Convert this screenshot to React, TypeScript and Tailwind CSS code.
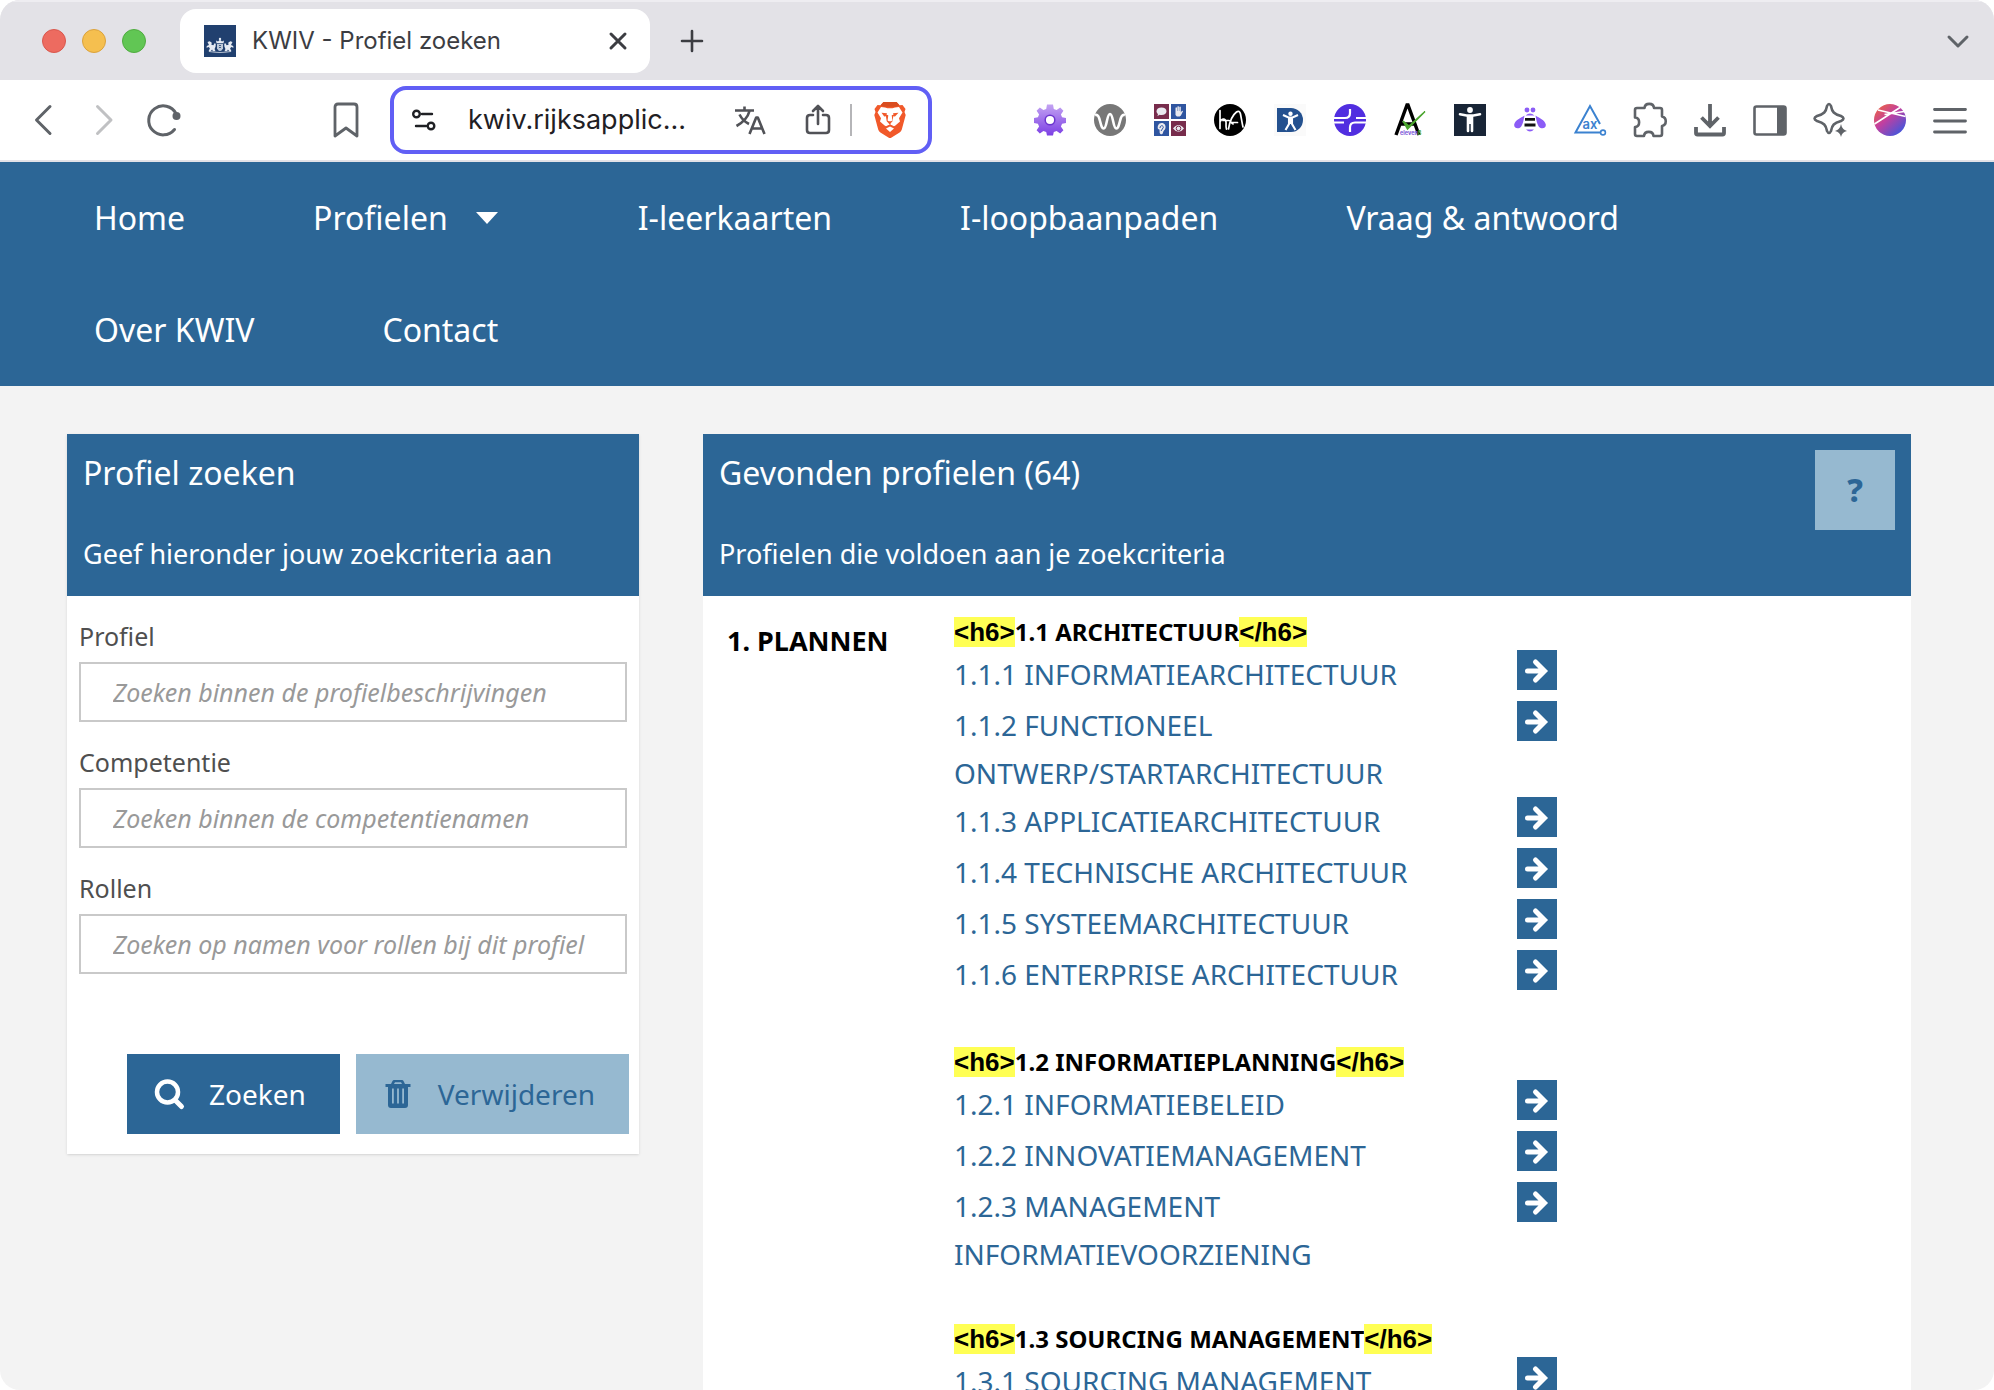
import React from 'react';

const NAV_ROWS = [
  [
    { label: 'Home' },
    { label: 'Profielen', menu: true },
    { label: 'I-leerkaarten' },
    { label: 'I-loopbaanpaden' },
    { label: 'Vraag & antwoord' },
  ],
  [{ label: 'Over KWIV' }, { label: 'Contact' }],
];

const FIELDS = [
  { id: 'profiel', label: 'Profiel', hint: 'Zoeken binnen de profielbeschrijvingen' },
  { id: 'competentie', label: 'Competentie', hint: 'Zoeken binnen de competentienamen' },
  { id: 'rollen', label: 'Rollen', hint: 'Zoeken op namen voor rollen bij dit profiel' },
];

const GROUPS = [
  {
    title: '1.1 ARCHITECTUUR',
    items: [
      '1.1.1 INFORMATIEARCHITECTUUR',
      '1.1.2 FUNCTIONEEL ONTWERP/STARTARCHITECTUUR',
      '1.1.3 APPLICATIEARCHITECTUUR',
      '1.1.4 TECHNISCHE ARCHITECTUUR',
      '1.1.5 SYSTEEMARCHITECTUUR',
      '1.1.6 ENTERPRISE ARCHITECTUUR',
    ],
  },
  {
    title: '1.2 INFORMATIEPLANNING',
    items: ['1.2.1 INFORMATIEBELEID', '1.2.2 INNOVATIEMANAGEMENT', '1.2.3 MANAGEMENT INFORMATIEVOORZIENING'],
  },
  { title: '1.3 SOURCING MANAGEMENT', items: ['1.3.1 SOURCING MANAGEMENT'] },
];

const line = {
  fill: 'none',
  stroke: '#5f6368',
  strokeWidth: 3,
  strokeLinecap: 'round' as const,
  strokeLinejoin: 'round' as const,
};

function Favicon() {
  return (
    <svg className="h-8 w-8" viewBox="0 0 32 32" aria-hidden="true">
      <rect width="32" height="32" fill="#21406f" />
      <g fill="#e6ebf3">
        <circle cx="16" cy="14" r="1.2" />
        <path d="M12.5 18.2 12 15.4l2 1 2-1.6 2 1.6 2-1-.5 2.8z" />
        <path d="M13 19h6v4.2q-.8 2.300-3 3-2.200-.7-3-3z" opacity=".8" />
        <path d="m3.500 17 2.200-.8 2.100 1.600-.4 1.900 2 .6 1.100-2.100 1.300.6-.2 2.800-1 2.400.9 2.200H8.900l-.8-1.700-1.400 1.700H4.500l1.400-2.600-1.100-1.500-2.300.6.300-1.600 2.200-1z" />
        <path d="m28.500 17-2.200-.8-2.100 1.600.4 1.900-2 .6-1.100-2.100-1.300.6.200 2.800 1 2.400-.9 2.200h2.600l.8-1.700 1.400 1.700h2.200l-1.400-2.600 1.100-1.500 2.300.6-.3-1.600-2.200-1z" />
        <path d="M5 26.200q11 1.500 22 0v.9q-11 1.300-22 0z" />
      </g>
      <path d="M15 20.500h2M15 22.500h2" stroke="#21406f" strokeWidth=".8" />
    </svg>
  );
}

function TabBar() {
  return (
    <div className="flex h-20 items-center border-t-2 border-[#eeedf1] bg-[#e3e2e7] pr-6 pl-[42px]">
      <div className="flex gap-4">
        <span className="size-6 rounded-full border border-[#d9574d] bg-[#ed6b60]" />
        <span className="size-6 rounded-full border border-[#dba23c] bg-[#f5bf4f]" />
        <span className="size-6 rounded-full border border-[#50ac40] bg-[#61c654]" />
      </div>
      <div className="ml-[34px] flex h-16 w-[470px] items-center rounded-2xl bg-white pr-4 pl-6">
        <Favicon />
        <span className="ml-4 flex-1 text-2xl text-[#3c3d42]">KWIV - Profiel zoeken</span>
        <button aria-label="Tab sluiten" className="p-1">
          <svg className="size-6" viewBox="0 0 24 24" {...line} stroke="#3c3d42">
            <path d="m5 5 14 14M19 5 5 19" />
          </svg>
        </button>
      </div>
      <button aria-label="Nieuw tabblad" className="ml-[30px]">
        <svg className="size-6" viewBox="0 0 24 24" {...line} strokeWidth={2.6} stroke="#3c3d42">
          <path d="M12 2v20M2 12h20" />
        </svg>
      </button>
      <button aria-label="Tabbladen zoeken" className="ml-auto">
        <svg className="size-6" viewBox="0 0 24 24" {...line}>
          <path d="m3 8 9 9 9-9" />
        </svg>
      </button>
    </div>
  );
}

const EXTENSIONS: { name: string; art: React.ReactNode }[] = [
  {
    name: 'Instellingen',
    art: (
      <>
        <defs>
          <linearGradient id="gear" x1="0" y1="0" x2="0" y2="1">
            <stop offset="0" stopColor="#c3a3f2" />
            <stop offset="1" stopColor="#7c3fe4" />
          </linearGradient>
        </defs>
        <g fill="url(#gear)">
          <path d="M15 2.500h6l.8 4.400 2.800 1.200 3.600-2.500 3.200 3.200-2.500 3.600 1.200 2.800 3.900.8v5l-3.900.8-1.200 2.800 2.500 3.600-3.200 3.200-3.600-2.500-2.800 1.200-.8 3.400h-6l-.8-3.400-2.800-1.200-3.600 2.500-3.200-3.200 2.500-3.600-1.200-2.800-3.900-.8v-5l3.900-.8 1.200-2.800-2.500-3.600 3.200-3.200 3.600 2.500 2.800-1.200z" />
        </g>
        <circle cx="18" cy="18" r="4.800" fill="#fff" stroke="#6c35cf" strokeWidth="1.5" />
      </>
    ),
  },
  {
    name: 'WAVE',
    art: (
      <>
        <circle cx="18" cy="18" r="16" fill="#777" />
        <path
          d="M3 13c3-1 4 2 5 6 1.300 5 2 7.500 3.700 7.500 3.300 0 3-14.500 6.300-14.500s3 14.500 6.300 14.500c1.700 0 2.400-2.500 3.700-7.500 1-4 2-7 5-6"
          fill="none"
          stroke="#fff"
          strokeWidth="2.6"
        />
      </>
    ),
  },
  {
    name: 'Toegankelijkheid',
    art: (
      <>
        <path fill="#772c4c" d="M2 2h15v15H2zM19 19h15v15H19z" />
        <path fill="#2f55a0" d="M19 2h15v15H19zM2 19h15v15H2z" />
        <g fill="#e9e9ef">
          <path d="M9.500 5.500c3 0 5 1.600 5 3.700s-2 3.700-5 3.700c-.7 0-1.300-.1-1.800-.2-.8.700-1.800 1-2.600 1 .6-.6.900-1.200.9-1.800-.9-.7-1.500-1.600-1.500-2.700 0-2.100 2-3.700 5-3.700z" />
          <path d="M23.500 8.500V5.800q.8-.9 1.500 0V9h.4V4.600q.8-.9 1.500 0V9h.4V5q.8-.9 1.500 0v5.500l1-1.500q1.300-.5 1.100.6l-2 4-1.300 1h-2.700l-1.400-1.500z" />
          <path d="M6 27c-1-3 .8-6 3.600-6 3 0 4.500 2.600 3.800 5.200-.5 1.800-2 2.300-2.300 4-.3 1.900-1.400 2.500-2.700 1.800C7 31 8 29 7.400 27.600z" />
          <path d="M21 26.500q2.500-3.500 5.500-3.500t5.500 3.500q-2.500 3.300-5.500 3.300T21 26.500z" />
        </g>
        <circle cx="26.5" cy="26.4" r="2.3" fill="none" stroke="#772c4c" />
        <path d="M8 26c0-3 3.500-3 3.300-.5L9 29" fill="none" stroke="#2f55a0" />
      </>
    ),
  },
  {
    name: 'hA',
    art: (
      <>
        <circle cx="18" cy="18" r="16" fill="#000" />
        <path
          d="M8 8.500v18M8 20c1.500-3.500 5.500-4 6 0 .3 2.500-.5 5 .5 7M11 18.500h6c2 0 2 3 4 3.500M16.500 27c1-6 4-14 8-17 2-1.500 3.500-.5 4 2 .8 4 1.500 9 2.500 13M18.500 20.500h7"
          fill="none"
          stroke="#fff"
          strokeWidth="1.7"
          strokeLinecap="round"
        />
      </>
    ),
  },
  {
    name: 'Digitale toegankelijkheid',
    art: (
      <>
        <path fill="#fafafa" d="M2 2h32v32H2z" />
        <path d="M5 6h14a12 12 0 0 1 0 24H5z" fill="#24518f" />
        <circle cx="18.5" cy="11.8" r="2.2" fill="#fff" />
        <path
          d="m11 13 5.500 2.500h4l5.500-2.500M18.500 16v6M17 16.500v5.500L13.500 28M20 16.500v5.500l3.500 6"
          stroke="#fff"
          strokeWidth="2.1"
          fill="none"
        />
      </>
    ),
  },
  {
    name: 'Stark',
    art: (
      <>
        <circle cx="18" cy="18" r="16" fill="#512ee0" />
        <path
          d="M2 16h11q5 0 5-5V7M34 16H24M2 20.500h10M34 20.500H23q-5 0-5 5V30"
          fill="none"
          stroke="#fff"
          strokeWidth="2.2"
        />
      </>
    ),
  },
  {
    name: 'A11y',
    art: (
      <>
        <path d="M4 33 15 3h1l11 30M9 22h13" fill="none" stroke="#000" strokeWidth="3.4" />
        <path d="M8 29h15v4H8z" fill="#fff" />
        <path d="m11 19 4.500 8L33 9.500 17 24z" fill="#4aa52e" stroke="#4aa52e" strokeWidth="1.5" />
        <text x="8" y="33" fontSize="5.500" fontWeight="700" fill="#7a55d8">
          eleven<tspan fill="#4aa52e">8</tspan>
        </text>
      </>
    ),
  },
  {
    name: 'Inspectie',
    art: (
      <>
        <path fill="#182536" d="M2 2h32v32H2z" />
        <circle cx="18" cy="8" r="2.9" fill="#fff" />
        <path
          d="m8 12.300 6.500 1.200h7l6.500-1.200M16 14v15M20 14v15"
          stroke="#fff"
          strokeWidth="2.6"
          strokeLinecap="round"
          fill="none"
        />
        <path d="M15 13h6v9h-6z" fill="#fff" />
      </>
    ),
  },
  {
    name: 'Bij',
    art: (
      <>
        <g fill="#8b5cf6">
          <circle cx="15" cy="8" r="2.4" />
          <circle cx="21" cy="8" r="2.4" />
          <path d="M13.500 13.500q4.500-4 9 0zM14 27.500h8q-4 4-8 0z" />
          <path d="M12.500 13.500C9 16 3 18 2.200 22.500 1.800 26 5 27 7.500 26c3-1.500 4-7 5-12.500zM23.500 13.500C27 16 33 18 33.800 22.500 34.200 26 31 27 28.500 26c-3-1.500-4-7-5-12.500z" />
        </g>
        <path d="M13 16h10v2.800H13zM12.500 21.500h11v3h-11z" fill="#111" />
      </>
    ),
  },
  {
    name: 'axe DevTools',
    art: (
      <>
        <path d="m28 22-10-18L3.500 30.500H28" fill="none" stroke="#3b82d0" strokeWidth="2" />
        <circle cx="31" cy="30.5" r="2.4" fill="none" stroke="#3b82d0" strokeWidth="1.6" />
        <text x="10.5" y="27" fontSize="13" fontWeight="600" fill="#3b82d0">
          ax
        </text>
      </>
    ),
  },
  {
    name: 'Extensies',
    art: (
      <path
        {...line}
        strokeWidth={2.6}
        d="M3 8q0-2 2-2h7.500c.5-5.500 9-5.500 9.500 0H28q2 0 2 2v6.500c5 1 5 8.500 0 9.500v8q0 2-2 2h-6.500c-.5-5.500-9-5.500-9.500 0H5q-2 0-2-2v-7c5.500-.5 5.500-9 0-9.500z"
      />
    ),
  },
  {
    name: 'Downloads',
    art: (
      <path
        d="M18 2v21M9.500 15.500l8.500 8.500 8.500-8.500M4 25v6q0 1.500 1.500 1.500h25q1.500 0 1.500-1.500v-6"
        fill="none"
        stroke="#5f6368"
        strokeWidth="3.8"
      />
    ),
  },
  {
    name: 'Zijbalk',
    art: (
      <>
        <rect x="2.5" y="4.5" width="31" height="28" rx="2" fill="none" stroke="#5f6368" strokeWidth="2.6" />
        <path d="M25 4h8v29h-8z" fill="#5f6368" />
      </>
    ),
  },
  {
    name: 'Leo',
    art: (
      <>
        <path
          {...line}
          strokeWidth={2.6}
          d="M15 4q2-4 4 0c1 6 3 8 10 10q5 2.500 0 5c-7 2-9 4-10 10q-2 4-4 0c-1-6-3-8-10-10q-5-2.500 0-5c7-2 9-4 10-10z"
        />
        <path d="M29 22q1 5.500 6 7-5 1-6 6-1-5-6-6 5-1.500 6-7z" fill="#5f6368" />
      </>
    ),
  },
  {
    name: 'Profiel',
    art: (
      <>
        <defs>
          <linearGradient id="globe" x1="0.1" y1="0.1" x2="0.8" y2="0.9">
            <stop offset="0" stopColor="#e8604c" />
            <stop offset=".45" stopColor="#c23fa0" />
            <stop offset="1" stopColor="#4a55d8" />
          </linearGradient>
        </defs>
        <circle cx="18" cy="18" r="16" fill="url(#globe)" />
        <path d="m2.500 22 25.500-16.500M6 8l27.500 6.500M12.500 12.500 32 9.500" stroke="#fff" strokeWidth="1.6" fill="none" />
      </>
    ),
  },
  {
    name: 'Menu',
    art: <path d="M2.500 7.500h31M2.500 19h31M2.500 30h31" {...line} strokeWidth={2.8} />,
  },
];

function AddressBar() {
  return (
    <div className="flex h-[68px] w-[542px] items-center rounded-2xl border-4 border-[#615ff5] bg-white pr-[22px] pl-[18px]">
      <button aria-label="Site-informatie">
        <svg className="size-6" viewBox="0 0 24 24" {...line} strokeWidth={2.4} stroke="#1f2024">
          <circle cx="4.5" cy="6" r="3.3" />
          <path d="M10 6h10M4 18h10" />
          <circle cx="19" cy="18" r="3.3" />
        </svg>
      </button>
      <input
        aria-label="Adres"
        className="ml-8 w-[230px] bg-transparent text-[27px] text-[#1f2024] outline-none"
        defaultValue="kwiv.rijksapplic..."
      />
      <button aria-label="Vertalen" className="ml-9">
        <svg className="size-8" viewBox="0 0 32 32" {...line} strokeWidth={2.6} strokeLinecap="butt" stroke="#515257">
          <path d="M1 6.500h19M10.500 2.500v4M15.500 7c-1.500 6-6 11-13 15M5.500 10.500c2 4 5.500 7.500 9.500 9.500M15.500 30l6.700-16.500h1.600L30.500 30M18 24.500h10" />
        </svg>
      </button>
      <button aria-label="Delen" className="ml-9">
        <svg className="size-8" viewBox="0 0 32 32" {...line} strokeWidth={2.6} stroke="#515257">
          <path d="M11 11H8q-3 0-3 3v12q0 3 3 3h16q3 0 3-3V14q0-3-3-3h-3M16 20V2M11 7l5-5 5 5" />
        </svg>
      </button>
      <span className="ml-4 h-8 w-0.5 bg-[#b5b5b8]" />
      <button aria-label="Brave Shields" className="ml-auto">
        <svg className="h-9 w-8" viewBox="0 0 32 36" aria-hidden="true">
          <path
            fill="#f1592a"
            d="M9.500 0h13l3 3.300 3-.3L31.500 7l-1 3 1.200 3-3.900 14.500q-.6 2-2.200 3L16.800 36h-1.600l-8.800-5.500q-1.600-1-2.200-3L.3 13l1.200-3-1-3L3.500 3l3 .3z"
          />
          <path fill="#d94d20" d="M9.500 0h13l3 3.300-3.500 1.500h-12L6.500 3.300z" />
          <path
            fill="#fff"
            d="m11 5.500 2.500.7h5l2.500-.7 4-.5 3.500 5.500-3.500 5.800 1 3.200-4.600 4-1.400.7-2.500-1.300h-3l-2.500 1.300-1.400-.7-4.600-4 1-3.200-3.500-5.800L7 5zM12 26.500l4-2 4 2-4 3.500z"
          />
          <path
            fill="#f1592a"
            d="m7.500 10.800 5.500.4-.5 1.500 1.800.5-.7 5.300 1.300.8h2.200l1.300-.8-.7-5.300 1.800-.5-.5-1.500 5.500-.4-3.500 3.800-1.700-.4-.8 5-2.500 2.800h-.8l-2.500-2.800-.8-5-1.700.4zM15.400 21h1.200v2.800h-1.200z"
          />
        </svg>
      </button>
    </div>
  );
}

function Toolbar() {
  return (
    <div className="flex h-[82px] items-center border-b-2 border-[#e3e2e7] bg-white pr-[26px] pl-7">
      <button aria-label="Terug">
        <svg className="size-8" viewBox="0 0 32 32" {...line}>
          <path d="M22 2.500 8.500 16 22 29.500" />
        </svg>
      </button>
      <button aria-label="Vooruit" className="ml-7">
        <svg className="size-8" viewBox="0 0 32 32" {...line} stroke="#c0c1c3">
          <path d="M9.500 2.500 23 16 9.500 29.500" />
        </svg>
      </button>
      <button aria-label="Vernieuwen" className="ml-[26px]">
        <svg className="h-9 w-9" viewBox="0 0 36 36" {...line}>
          <path d="M28.500 27.500A14.500 14.500 0 1 1 30 11.500" />
          <circle cx="30.500" cy="14" r="4" fill="#5f6368" stroke="none" />
        </svg>
      </button>
      <button aria-label="Bladwijzer" className="ml-[148px]">
        <svg className="h-9 w-8" viewBox="0 0 32 36" {...line} strokeWidth={2.8}>
          <path d="M5 5q0-3 3-3h16q3 0 3 3v29l-11-8-11 8z" />
        </svg>
      </button>
      <div className="ml-7">
        <AddressBar />
      </div>
      <div className="ml-auto flex gap-6">
        {EXTENSIONS.map((e) => (
          <button key={e.name} aria-label={e.name}>
            <svg className="size-9" viewBox="0 0 36 36" aria-hidden="true">
              {e.art}
            </svg>
          </button>
        ))}
      </div>
    </div>
  );
}

function SiteNav() {
  return (
    <nav className="bg-[#2c6696] px-[30px] text-[32px] text-white">
      {NAV_ROWS.map((row, i) => (
        <div key={i} className="flex h-28">
          {row.map((item) => (
            <a key={item.label} href="#" className="flex items-center px-16">
              {item.label}
              {item.menu && (
                <svg className="mr-2.5 ml-7 h-3 w-6" viewBox="0 0 24 12" aria-hidden="true">
                  <path d="M0 0h22L11 12z" fill="#fff" />
                </svg>
              )}
            </a>
          ))}
        </div>
      ))}
    </nav>
  );
}

function PanelHeader({ title, text, children }: { title: string; text: string; children?: React.ReactNode }) {
  return (
    <header className="flex h-[162px] items-start justify-between bg-[#2c6696] p-4 text-white">
      <div>
        <h2 className="text-[32px] leading-[46px]">{title}</h2>
        <p className="mt-[38px] text-[27px] leading-[40px]">{text}</p>
      </div>
      {children}
    </header>
  );
}

function SearchPanel() {
  return (
    <section className="w-[572px] shrink-0 bg-white shadow-sm">
      <PanelHeader title="Profiel zoeken" text="Geef hieronder jouw zoekcriteria aan" />
      <form className="px-3 pt-5 pb-5" onSubmit={(e) => e.preventDefault()}>
        {FIELDS.map((f) => (
          <div key={f.id} className="mb-5">
            <label htmlFor={f.id} className="mb-1.5 block text-[25px] leading-[40px] text-[#4f4f4f]">
              {f.label}
            </label>
            <input
              id={f.id}
              placeholder={f.hint}
              className="block h-[60px] w-full border-2 border-[#c9c9c9] px-8 text-[25px] italic outline-none placeholder:text-[#999]"
            />
          </div>
        ))}
        <div className="-mr-0.5 mt-20 flex justify-end gap-4 text-[28px]">
          <button className="flex h-20 items-center bg-[#2c6696] pr-[34px] pl-6 text-white">
            <svg className="size-9" viewBox="0 0 36 36" aria-hidden="true">
              <circle cx="16.5" cy="16" r="10.5" fill="none" stroke="#fff" strokeWidth="4.5" />
              <path d="m24 24 6.500 6.500" stroke="#fff" strokeWidth="5" strokeLinecap="round" />
            </svg>
            <span className="ml-[22px]">Zoeken</span>
          </button>
          <button type="reset" className="flex h-20 items-center bg-[#96b9d0] pr-[34px] pl-6 text-[#2c6696]">
            <svg className="size-9" viewBox="0 0 36 36" aria-hidden="true">
              <path
                fill="#2c6696"
                fillRule="evenodd"
                d="M5.500 8H11l1.500-3Q13 4 14 4h8q1 0 1.500 1L25 8h5.500v3H28v18q0 3-3 3H11q-3 0-3-3V11H5.500zM14 8h8l-1-1.800h-6zM12 12.500v15h1.800v-15zm5.100 0v15h1.800v-15zm5.100 0v15H24v-15z"
              />
            </svg>
            <span className="ml-[22px]">Verwijderen</span>
          </button>
        </div>
      </form>
    </section>
  );
}

function TagMark({ children }: { children: string }) {
  return (
    <span className="bg-[#ffff54] font-['Liberation_Sans',sans-serif] text-[26px] leading-[30px]">{children}</span>
  );
}

function ResultsPanel() {
  return (
    <section className="flex-1 bg-white">
      <PanelHeader title="Gevonden profielen (64)" text="Profielen die voldoen aan je zoekcriteria">
        <button aria-label="Help" className="size-20 bg-[#96b9d0] text-[32px] font-extrabold text-[#2c6696]">
          ?
        </button>
      </PanelHeader>
      <div className="flex pt-[21px] pl-6">
        <h5 className="w-[227px] pt-1 text-[27px] leading-[40px] font-bold text-black">1. PLANNEN</h5>
        <div className="w-[603px]">
          {GROUPS.map((g) => (
            <div key={g.title} className="mb-[46px]">
              <h6 className="mb-[3px] flex h-[30px] items-center text-2xl leading-[30px] font-bold text-black">
                <TagMark>{'<h6>'}</TagMark>
                {g.title}
                <TagMark>{'</h6>'}</TagMark>
              </h6>
              <ul>
                {g.items.map((item) => (
                  <li key={item} className="flex min-h-[51px] items-start justify-between">
                    <a href="#" className="w-[480px] text-[28px] leading-[48px] text-[#2c6696]">
                      {item}
                    </a>
                    <button aria-label={`Open ${item}`} className="size-10 bg-[#2c6696] p-1">
                      <svg className="size-8" viewBox="0 0 32 32" aria-hidden="true">
                        <path
                          d="M6.500 17h16M14.500 8l9 9-9 9"
                          fill="none"
                          stroke="#fff"
                          strokeWidth="5"
                          strokeLinejoin="miter"
                          strokeLinecap="round"
                        />
                      </svg>
                    </button>
                  </li>
                ))}
              </ul>
            </div>
          ))}
        </div>
      </div>
    </section>
  );
}

export default function App() {
  return (
    <div className="h-screen overflow-hidden rounded-[20px] bg-[#f3f3f3] font-['Noto_Sans',sans-serif]">
      <div className="font-['Inter',sans-serif]">
        <TabBar />
        <Toolbar />
      </div>
      <SiteNav />
      <main className="flex items-start gap-16 pt-12 pr-[83px] pl-[67px]">
        <SearchPanel />
        <ResultsPanel />
      </main>
    </div>
  );
}
